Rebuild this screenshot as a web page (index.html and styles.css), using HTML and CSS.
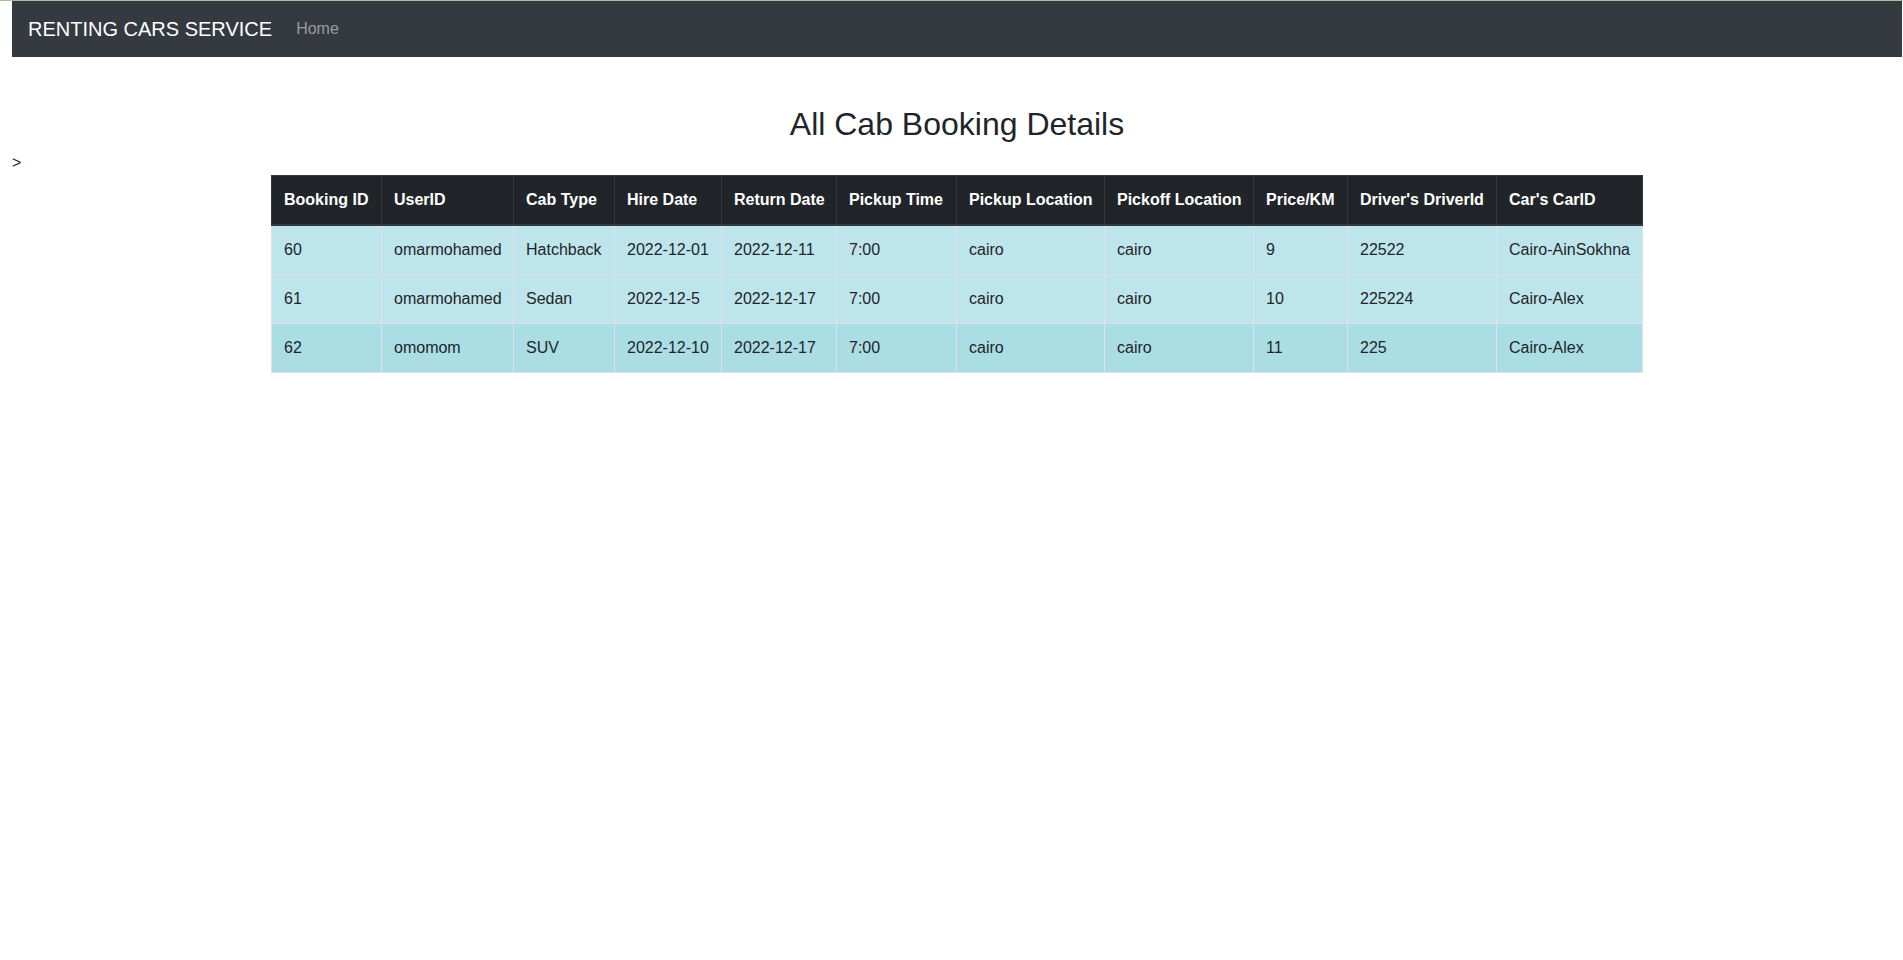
FILE: index.html
```html
<!DOCTYPE html>
<html lang="en">
<head>
<meta charset="utf-8">
<title>All Cab Booking Details</title>
<link rel="stylesheet" href="styles.css">
</head>
<body>
<div class="page">
  <nav class="navbar">
    <a class="brand" href="#">RENTING CARS SERVICE</a>
    <a class="nav-link" href="#">Home</a>
  </nav>
  <h2 class="title">All Cab Booking Details</h2>
  <div class="stray">&gt;</div>
  <table class="bookings">
    <colgroup>
      <col class="c1"><col class="c2"><col class="c3"><col class="c4"><col class="c5"><col class="c6"><col class="c7"><col class="c8"><col class="c9"><col class="c10"><col class="c11">
    </colgroup>
    <thead>
      <tr>
        <th>Booking ID</th><th>UserID</th><th>Cab Type</th><th>Hire Date</th><th>Return Date</th><th>Pickup Time</th><th>Pickup Location</th><th>Pickoff Location</th><th>Price/KM</th><th>Driver's DriverId</th><th>Car's CarID</th>
      </tr>
    </thead>
    <tbody>
      <tr>
        <td>60</td><td>omarmohamed</td><td>Hatchback</td><td>2022-12-01</td><td>2022-12-11</td><td>7:00</td><td>cairo</td><td>cairo</td><td>9</td><td>22522</td><td>Cairo-AinSokhna</td>
      </tr>
      <tr>
        <td>61</td><td>omarmohamed</td><td>Sedan</td><td>2022-12-5</td><td>2022-12-17</td><td>7:00</td><td>cairo</td><td>cairo</td><td>10</td><td>225224</td><td>Cairo-Alex</td>
      </tr>
      <tr class="hover">
        <td>62</td><td>omomom</td><td>SUV</td><td>2022-12-10</td><td>2022-12-17</td><td>7:00</td><td>cairo</td><td>cairo</td><td>11</td><td>225</td><td>Cairo-Alex</td>
      </tr>
    </tbody>
  </table>
</div>
</body>
</html>
```
FILE: styles.css
```css
html, body {
  margin: 0;
  padding: 0;
}
body {
  font-family: "Liberation Sans", Arial, sans-serif;
  font-size: 16px;
  line-height: 1.5;
  color: #212529;
  background: #fff;
  border-top: 1px solid #a5c0a1;
}
.page {
  margin: 0 1px 0 12px;
}
.navbar {
  display: flex;
  align-items: center;
  background: #343a40;
  padding: 8px 16px;
  height: 40px;
}
.brand {
  font-size: 20px;
  line-height: 30px;
  padding: 5px 0;
  margin-right: 16px;
  color: #fff;
  text-decoration: none;
}
.nav-link {
  padding: 8px;
  color: rgba(255, 255, 255, 0.5);
  text-decoration: none;
}
.title {
  margin: 48px 0 8px;
  font-size: 32px;
  font-weight: 500;
  line-height: 1.2;
  text-align: center;
}
.stray {
  line-height: 24px;
}
.bookings {
  width: 1371px;
  margin: 0 auto;
  border-collapse: collapse;
  table-layout: fixed;
  border: 1px solid #dee2e6;
}
.c1 { width: 110px; }
.c2 { width: 132px; }
.c3 { width: 101px; }
.c4 { width: 107px; }
.c5 { width: 115px; }
.c6 { width: 120px; }
.c7 { width: 148px; }
.c8 { width: 149px; }
.c9 { width: 94px; }
.c10 { width: 149px; }
.c11 { width: 146px; }
.bookings th,
.bookings td {
  padding: 12px;
  text-align: left;
  vertical-align: top;
  white-space: nowrap;
  border: 1px solid #dee2e6;
}
.bookings th {
  background: #212529;
  color: #fff;
  font-weight: 700;
  border-color: #32383e;
  border-bottom-width: 2px;
}
.bookings tbody tr {
  background: #bee5eb;
}
.bookings tbody tr.hover {
  background: #abdde5;
}
```
